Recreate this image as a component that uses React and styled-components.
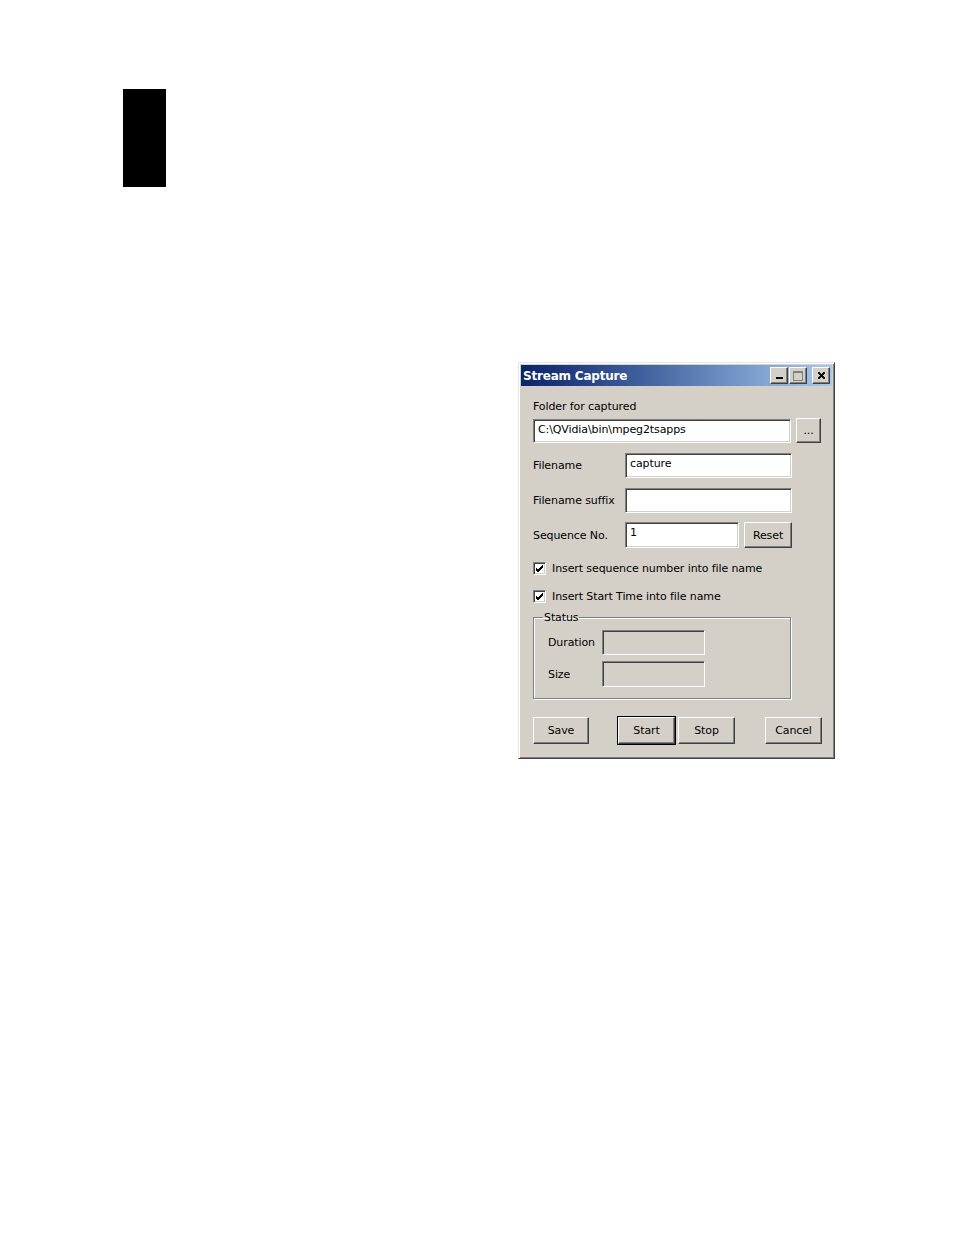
import React from 'react'
import styled, { createGlobalStyle, css } from 'styled-components'

const GlobalStyle = createGlobalStyle`
  html, body {
    margin: 0;
    padding: 0;
    background: #fff;
  }
  body {
    font-family: "DejaVu Sans", Tahoma, sans-serif;
  }
`

const Page = styled.div`
  width: 954px;
  height: 1235px;
  padding: 89px 0 0 123px;
  box-sizing: border-box;
`

const SideMark = styled.div`
  width: 43px;
  height: 98px;
  background: #000;
`

const Dialog = styled.div`
  margin: 175px 0 0 395px;
  width: 317px;
  height: 397px;
  box-sizing: border-box;
  background: #d4d0c8;
  border-style: solid;
  border-width: 1px;
  border-color: #e8e6e0 #404040 #404040 #e8e6e0;
  box-shadow: inset 1px 1px 0 #fff, inset -1px -1px 0 #808080;
  padding: 2px;
  display: flex;
  flex-direction: column;
  font-size: 11px;
  letter-spacing: -0.1px;
  color: #000;
`

const TitleBar = styled.div`
  height: 21px;
  display: flex;
  align-items: center;
  padding: 0 2px 0 2px;
  background: linear-gradient(to right, #0a246a 0%, #3a5a98 35%, #a6caf0 100%);
`

const Title = styled.div`
  flex: 1;
  color: #fff;
  font-weight: bold;
  font-size: 12px;
  letter-spacing: -0.2px;
`

const raised = css`
  background: #d4d0c8;
  border-style: solid;
  border-width: 1px;
  border-color: #fff #404040 #404040 #fff;
  box-shadow: inset -1px -1px 0 #808080;
  box-sizing: border-box;
`

const sunken = css`
  border-style: solid;
  border-width: 1px;
  border-color: #808080 #fff #fff #808080;
  box-shadow: inset 1px 1px 0 #404040, inset -1px -1px 0 #d4d0c8;
  box-sizing: border-box;
`

const CaptionButton = styled.div`
  ${raised}
  width: 18px;
  height: 17px;
  display: grid;
  place-items: center;
  margin-left: ${p => p.$gap || 0}px;
`

const Body = styled.div`
  flex: 1;
  display: flex;
  flex-direction: column;
  padding: 0 0 0 12px;
`

const Label = styled.div`
  width: ${p => p.$w || 'auto'}px;
  white-space: nowrap;
`

const Field = styled.div`
  ${sunken}
  width: ${p => p.$w}px;
  height: ${p => p.$h || 25}px;
  background: ${p => (p.$disabled ? '#d4d0c8' : '#fff')};
  padding: 3px 0 0 4px;
  white-space: nowrap;
`

const Row = styled.div`
  display: flex;
  align-items: center;
  margin-top: ${p => p.$top || 0}px;
`

const Button = styled.div`
  ${raised}
  width: ${p => p.$w}px;
  height: ${p => p.$h || 27}px;
  display: grid;
  place-items: center;
  margin-left: ${p => p.$gap || 0}px;
  ${p => p.$default && css`
    outline: 1px solid #000;
    outline-offset: 0;
  `}
`

const Check = styled.div`
  ${sunken}
  width: 13px;
  height: 13px;
  background: #fff;
  display: grid;
  place-items: center;
  margin-right: 6px;
`

const Group = styled.fieldset`
  margin: 8px 0 0 0;
  padding: 0 0 0 14px;
  width: 258px;
  height: 88px;
  box-sizing: border-box;
  border: 1px solid #808080;
  box-shadow: 1px 1px 0 #fff, inset 1px 1px 0 #fff;
  display: flex;
  flex-direction: column;

  legend {
    padding: 0 1px;
    margin-left: -5px;
    font-size: 11px;
  }
`

const Tick = () => (
  <svg width="9" height="9" viewBox="0 0 9 9">
    <path d="M1 4 L3 6 L8 1 M1 5 L3 7 L8 2 M1 6 L3 8 L8 3" stroke="#000" strokeWidth="1" fill="none" shapeRendering="crispEdges" />
  </svg>
)

export default function App() {
  return (
    <Page>
      <GlobalStyle />
      <SideMark />
      <Dialog>
        <TitleBar>
          <Title>Stream Capture</Title>
          <CaptionButton>
            <svg width="9" height="9" viewBox="0 0 9 9"><rect x="1" y="6" width="7" height="2" fill="#000" /></svg>
          </CaptionButton>
          <CaptionButton $gap={1}>
            <svg width="10" height="10" viewBox="0 0 10 10">
              <rect x="0.5" y="0.5" width="9" height="9" fill="none" stroke="#808080" />
              <rect x="1" y="1" width="8" height="1" fill="#808080" />
              <path d="M1.5 10.5 H10.5 V1.5" fill="none" stroke="#fff" />
            </svg>
          </CaptionButton>
          <CaptionButton $gap={5}>
            <svg width="9" height="9" viewBox="0 0 9 9">
              <path d="M1 1 L8 8 M2 1 L8 7 M1 2 L7 8 M8 1 L1 8 M7 1 L1 7 M8 2 L2 8" stroke="#000" strokeWidth="0.9" />
            </svg>
          </CaptionButton>
        </TitleBar>
        <Body>
          <Row $top={14}>
            <Label>Folder for captured</Label>
          </Row>
          <Row $top={5}>
            <Field $w={258} $h={24}>C:\QVidia\bin\mpeg2tsapps</Field>
            <Button $w={25} $h={25} $gap={5}>...</Button>
          </Row>
          <Row $top={10}>
            <Label $w={92}>Filename</Label>
            <Field $w={167}>capture</Field>
          </Row>
          <Row $top={10}>
            <Label $w={92}>Filename suffix</Label>
            <Field $w={167} />
          </Row>
          <Row $top={9}>
            <Label $w={92}>Sequence No.</Label>
            <Field $w={114} $h={26}>1</Field>
            <Button $w={48} $h={26} $gap={5}>Reset</Button>
          </Row>
          <Row $top={14}>
            <Check><Tick /></Check>
            <Label>Insert sequence number into file name</Label>
          </Row>
          <Row $top={15}>
            <Check><Tick /></Check>
            <Label>Insert Start Time into file name</Label>
          </Row>
          <Group>
            <legend>Status</legend>
            <Row $top={6}>
              <Label $w={54}>Duration</Label>
              <Field $w={103} $disabled />
            </Row>
            <Row $top={6}>
              <Label $w={54}>Size</Label>
              <Field $w={103} $h={26} $disabled />
            </Row>
          </Group>
          <Row $top={18}>
            <Button $w={56}>Save</Button>
            <Button $w={57} $gap={29} $default>Start</Button>
            <Button $w={57} $gap={3}>Stop</Button>
            <Button $w={57} $gap={30}>Cancel</Button>
          </Row>
        </Body>
      </Dialog>
    </Page>
  )
}
